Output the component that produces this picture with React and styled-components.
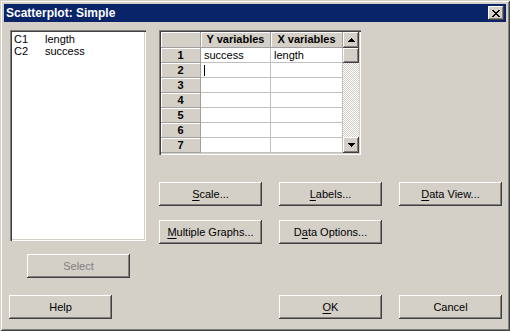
import React from 'react';
import styled, { createGlobalStyle } from 'styled-components';

const GlobalStyle = createGlobalStyle`
  body {
    margin: 0;
    font-family: "Liberation Sans", Arial, sans-serif;
    font-size: 11px;
    background: #d4d0c8;
  }
`;

const face = '#d4d0c8';

// classic raised / sunken edges
const raised = `
  box-shadow: inset -1px -1px #404040, inset 1px 1px #fff, inset -2px -2px #808080, inset 2px 2px ${face};
`;
const sunken = `
  box-shadow: inset 1px 1px #808080, inset 2px 2px #404040, inset -1px -1px #fff, inset -2px -2px ${face};
`;

const Window = styled.div`
  width: 510px;
  height: 331px;
  box-sizing: border-box;
  background: ${face};
  padding: 4px;
  display: flex;
  flex-direction: column;
  box-shadow: inset 1px 1px ${face}, inset -1px -1px #404040, inset 2px 2px #fff, inset -2px -2px #808080;
`;

const TitleBar = styled.div`
  height: 18px;
  background: #0a246a;
  display: flex;
  align-items: center;
  justify-content: space-between;
  padding: 0 2px 0 2px;
`;

const Title = styled.span`
  color: #fff;
  font-weight: bold;
  font-size: 12px;
`;

const CloseButton = styled.div`
  width: 16px;
  height: 14px;
  background: ${face};
  display: flex;
  align-items: center;
  justify-content: center;
  ${raised}
`;

const Body = styled.div`
  flex: 1;
  display: flex;
  flex-direction: column;
  padding: 8px 0 0 6px;
`;

const Main = styled.div`
  display: flex;
`;

const LeftCol = styled.div`
  width: 136px;
  display: flex;
  flex-direction: column;
`;

const ListBox = styled.div`
  height: 211px;
  background: #fff;
  padding: 3px 3px;
  box-sizing: border-box;
  ${sunken}
`;

const ListRow = styled.div`
  display: grid;
  grid-template-columns: 31px auto;
  line-height: 12px;
  padding-left: 1px;
`;

const RightCol = styled.div`
  margin-left: 13px;
  display: flex;
  flex-direction: column;
`;

const Table = styled.div`
  width: 202px;
  height: 125px;
  box-sizing: border-box;
  padding: 2px;
  display: flex;
  ${sunken}
`;

const Grid = styled.div`
  display: grid;
  grid-template-columns: 40px 70px 72px;
  grid-template-rows: 16px repeat(7, 15px);
`;

const HeadCell = styled.div`
  background: ${face};
  border-right: 1px solid #a0a0a0;
  border-bottom: 1px solid #a0a0a0;
  box-shadow: inset 1px 1px #fff;
  box-sizing: border-box;
  font-weight: bold;
  display: flex;
  align-items: center;
  justify-content: center;
  line-height: 1;
`;

const Cell = styled.div`
  background: #fff;
  border-right: 1px solid #c0c0c0;
  border-bottom: 1px solid #c0c0c0;
  box-sizing: border-box;
  display: flex;
  align-items: center;
  padding-left: 3px;
  line-height: 1;
`;

const Caret = styled.span`
  width: 1px;
  height: 11px;
  background: #000;
`;

const ScrollBar = styled.div`
  width: 16px;
  display: flex;
  flex-direction: column;
`;

const ScrollButton = styled.div`
  height: ${p => p.$h}px;
  background: ${face};
  display: flex;
  align-items: center;
  justify-content: center;
  ${raised}
`;

const Track = styled.div`
  flex: 1;
  background: repeating-conic-gradient(#fff 0 25%, ${face} 0 50%) 0 0 / 2px 2px;
`;

const ButtonRow = styled.div`
  display: flex;
  gap: 17px;
  margin-top: ${p => p.$top}px;
`;

const Button = styled.div`
  width: 103px;
  height: 24px;
  box-sizing: border-box;
  background: ${face};
  display: flex;
  align-items: center;
  justify-content: center;
  color: ${p => (p.$disabled ? '#808080' : '#000')};
  margin-left: ${p => p.$left || 0}px;
  ${raised}
  u { text-decoration-thickness: 1px; text-underline-offset: 2px; }
`;

const Footer = styled.div`
  margin-top: auto;
  margin-bottom: 8px;
  margin-left: -1px;
  display: flex;
`;

const Arrow = ({ down }) => (
  <svg width="7" height="4" viewBox="0 0 7 4" shapeRendering="crispEdges">
    <polygon points={down ? '0,0 7,0 3.5,4' : '3.5,0 7,4 0,4'} fill="#000" />
  </svg>
);

const rows = [
  ['success', 'length'],
  ['', ''],
  ['', ''],
  ['', ''],
  ['', ''],
  ['', ''],
  ['', ''],
];

export default function App() {
  return (
    <>
      <GlobalStyle />
      <Window>
        <TitleBar>
          <Title>Scatterplot: Simple</Title>
          <CloseButton>
            <svg width="8" height="7" viewBox="0 0 8 7" shapeRendering="crispEdges">
              <path d="M0 0h2v1h-2zM6 0h2v1h-2zM1 1h2v1h-2zM5 1h2v1h-2zM2 2h4v1h-4zM3 3h2v1h-2zM2 4h4v1h-4zM1 5h2v1h-2zM5 5h2v1h-2zM0 6h2v1h-2zM6 6h2v1h-2z" fill="#000" />
            </svg>
          </CloseButton>
        </TitleBar>
        <Body>
          <Main>
            <LeftCol>
              <ListBox>
                <ListRow><span>C1</span><span>length</span></ListRow>
                <ListRow><span>C2</span><span>success</span></ListRow>
              </ListBox>
              <Button $disabled $left={17} style={{ marginTop: 13 }}>Select</Button>
            </LeftCol>
            <RightCol>
              <Table>
                <Grid>
                  <HeadCell />
                  <HeadCell>Y variables</HeadCell>
                  <HeadCell>X variables</HeadCell>
                  {rows.map((r, i) => (
                    <React.Fragment key={i}>
                      <HeadCell>{i + 1}</HeadCell>
                      <Cell>{i === 1 ? <Caret /> : r[0]}</Cell>
                      <Cell>{r[1]}</Cell>
                    </React.Fragment>
                  ))}
                </Grid>
                <ScrollBar>
                  <ScrollButton $h={16}><Arrow /></ScrollButton>
                  <ScrollButton $h={15} />
                  <Track />
                  <ScrollButton $h={16}><Arrow down /></ScrollButton>
                </ScrollBar>
              </Table>
              <ButtonRow $top={27}>
                <Button><span><u>S</u>cale...</span></Button>
                <Button><span><u>L</u>abels...</span></Button>
                <Button><span><u>D</u>ata View...</span></Button>
              </ButtonRow>
              <ButtonRow $top={14}>
                <Button><span><u>M</u>ultiple Graphs...</span></Button>
                <Button><span>D<u>a</u>ta Options...</span></Button>
              </ButtonRow>
            </RightCol>
          </Main>
          <Footer>
            <Button>Help</Button>
            <Button $left={167}><span><u>O</u>K</span></Button>
            <Button $left={17}>Cancel</Button>
          </Footer>
        </Body>
      </Window>
    </>
  );
}
